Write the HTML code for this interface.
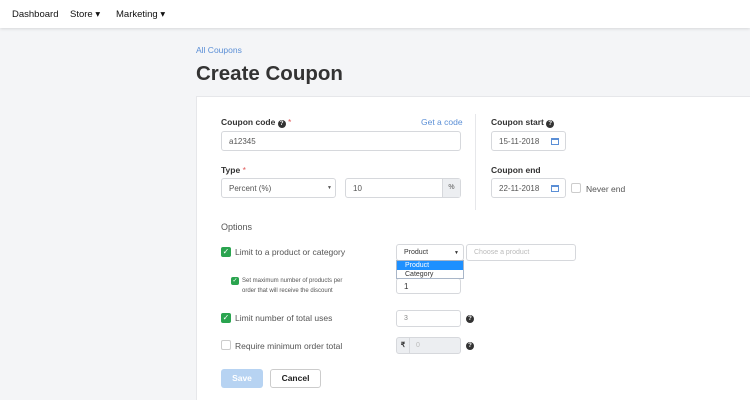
<!DOCTYPE html>
<html><head><meta charset="utf-8"><style>
*{box-sizing:border-box;margin:0;padding:0}
html,body{width:750px;height:400px;overflow:hidden}
body{background:#f4f5f7;font-family:"Liberation Sans",sans-serif;color:#333;position:relative}
.a{position:absolute}
.nav{left:0;top:0;width:750px;height:28px;background:#fff;box-shadow:0 1px 3px rgba(0,0,0,.12)}
.nav span{position:absolute;top:9px;font-size:9.5px;color:#111}
.card{left:196px;top:96px;width:554px;height:304px;background:#fff;border:1px solid #e6e7ea;border-bottom:none;border-right:none}
.lbl{font-size:8.5px;font-weight:bold;color:#333}
.in{border:1px solid #d6d8dc;border-radius:3px;background:#fff;font-size:8px;color:#555;padding-left:7px;display:flex;align-items:center}
.req{color:#e05a5a;font-weight:normal}
.q{display:inline-block;width:8px;height:8px;border-radius:50%;background:#333;color:#fff;font-size:6px;text-align:center;line-height:8px;font-weight:bold;vertical-align:0}
.cb{width:10px;height:10px;border-radius:2px;background:#2aa44f;color:#fff;font-size:8px;line-height:10px;text-align:center}
.cbe{width:10px;height:10px;border-radius:2px;border:1px solid #ccc;background:#fff}
.t{font-size:8.5px;color:#555}
.cal{width:8px;height:7px;border:1px solid #5b8fd6;border-top-width:2px}
</style></head><body>
<div class="a nav"><span style="left:12px">Dashboard</span><span style="left:70px">Store ▾</span><span style="left:116px">Marketing ▾</span></div>
<div class="a" style="left:196px;top:45px;font-size:8.5px;color:#5b8fd6">All Coupons</div>
<div class="a" style="left:196px;top:62px;font-size:20.5px;font-weight:bold;color:#333">Create Coupon</div>
<div class="a card"></div>
<div class="a" style="left:475px;top:114px;width:1px;height:96px;background:#e6e7ea"></div>

<div class="a lbl" style="left:221px;top:117px">Coupon code <span class="q">?</span> <span class="req">*</span></div>
<div class="a" style="left:421px;top:117px;font-size:8.5px;color:#5b8fd6">Get a code</div>
<div class="a in" style="left:221px;top:131px;width:240px;height:20px">a12345</div>
<div class="a lbl" style="left:221px;top:165px">Type <span class="req">*</span></div>
<div class="a in" style="left:221px;top:178px;width:115px;height:20px">Percent (%)<span style="position:absolute;right:3px;font-size:5px">▼</span></div>
<div class="a in" style="left:345px;top:178px;width:116px;height:20px">10<span style="position:absolute;right:0;top:0;width:18px;height:18px;background:#eceef1;border-left:1px solid #d6d8dc;text-align:center;line-height:18px;font-size:7px">%</span></div>

<div class="a lbl" style="left:491px;top:117px">Coupon start <span class="q">?</span></div>
<div class="a in" style="left:491px;top:131px;width:75px;height:20px">15-11-2018<div class="cal" style="position:absolute;right:6px;top:6px"></div></div>
<div class="a lbl" style="left:491px;top:165px">Coupon end</div>
<div class="a in" style="left:491px;top:178px;width:75px;height:20px">22-11-2018<div class="cal" style="position:absolute;right:6px;top:6px"></div></div>
<div class="a cbe" style="left:571px;top:183px"></div>
<div class="a t" style="left:586px;top:184px">Never end</div>

<div class="a t" style="left:221px;top:222px;font-size:9px">Options</div>
<div class="a cb" style="left:221px;top:247px">✓</div>
<div class="a t" style="left:235px;top:247px">Limit to a product or category</div>
<div class="a cb" style="left:231px;top:277px;width:8px;height:8px;font-size:6px;line-height:8px">✓</div>
<div class="a" style="left:242px;top:276px;font-size:6px;color:#555;line-height:10px">Set maximum number of products per<br>order that will receive the discount</div>
<div class="a in" style="left:396px;top:278px;width:65px;height:16px;color:#333">1</div>
<div class="a in" style="left:396px;top:244px;width:68px;height:17px;color:#333;font-size:7px">Product<span style="position:absolute;right:4px;font-size:5px">▼</span></div>
<div class="a" style="left:396px;top:260px;width:68px;height:19px;background:#fff;border:1px solid #a9b6c8;font-size:7px">
<div style="background:#1e90ff;color:#fff;padding-left:8px;height:9px;line-height:9px">Product</div>
<div style="padding-left:8px;height:9px;line-height:9px;color:#333">Category</div></div>
<div class="a in" style="left:466px;top:244px;width:110px;height:17px;color:#bbb;font-size:7px">Choose a product</div>

<div class="a cb" style="left:221px;top:313px">✓</div>
<div class="a t" style="left:235px;top:313px">Limit number of total uses</div>
<div class="a in" style="left:396px;top:310px;width:65px;height:17px;color:#888;font-size:7px">3</div>
<div class="a q" style="left:466px;top:315px">?</div>
<div class="a cbe" style="left:221px;top:340px"></div>
<div class="a t" style="left:235px;top:341px">Require minimum order total</div>
<div class="a in" style="left:396px;top:337px;width:65px;height:17px;background:#eceef1;color:#bbb;font-size:7px;padding-left:0"><span style="width:13px;text-align:center;color:#333;font-weight:bold;border-right:1px solid #d6d8dc;height:15px;line-height:15px">₹</span><span style="padding-left:6px">0</span></div>
<div class="a q" style="left:466px;top:342px">?</div>

<div class="a" style="left:221px;top:369px;width:42px;height:19px;background:#b7d3f2;border-radius:3px;color:#fff;font-size:8.5px;font-weight:bold;text-align:center;line-height:19px">Save</div>
<div class="a" style="left:270px;top:369px;width:51px;height:19px;border:1px solid #ccc;border-radius:3px;background:#fff;font-size:8.5px;font-weight:bold;text-align:center;line-height:17px;color:#222">Cancel</div>
</body></html>
